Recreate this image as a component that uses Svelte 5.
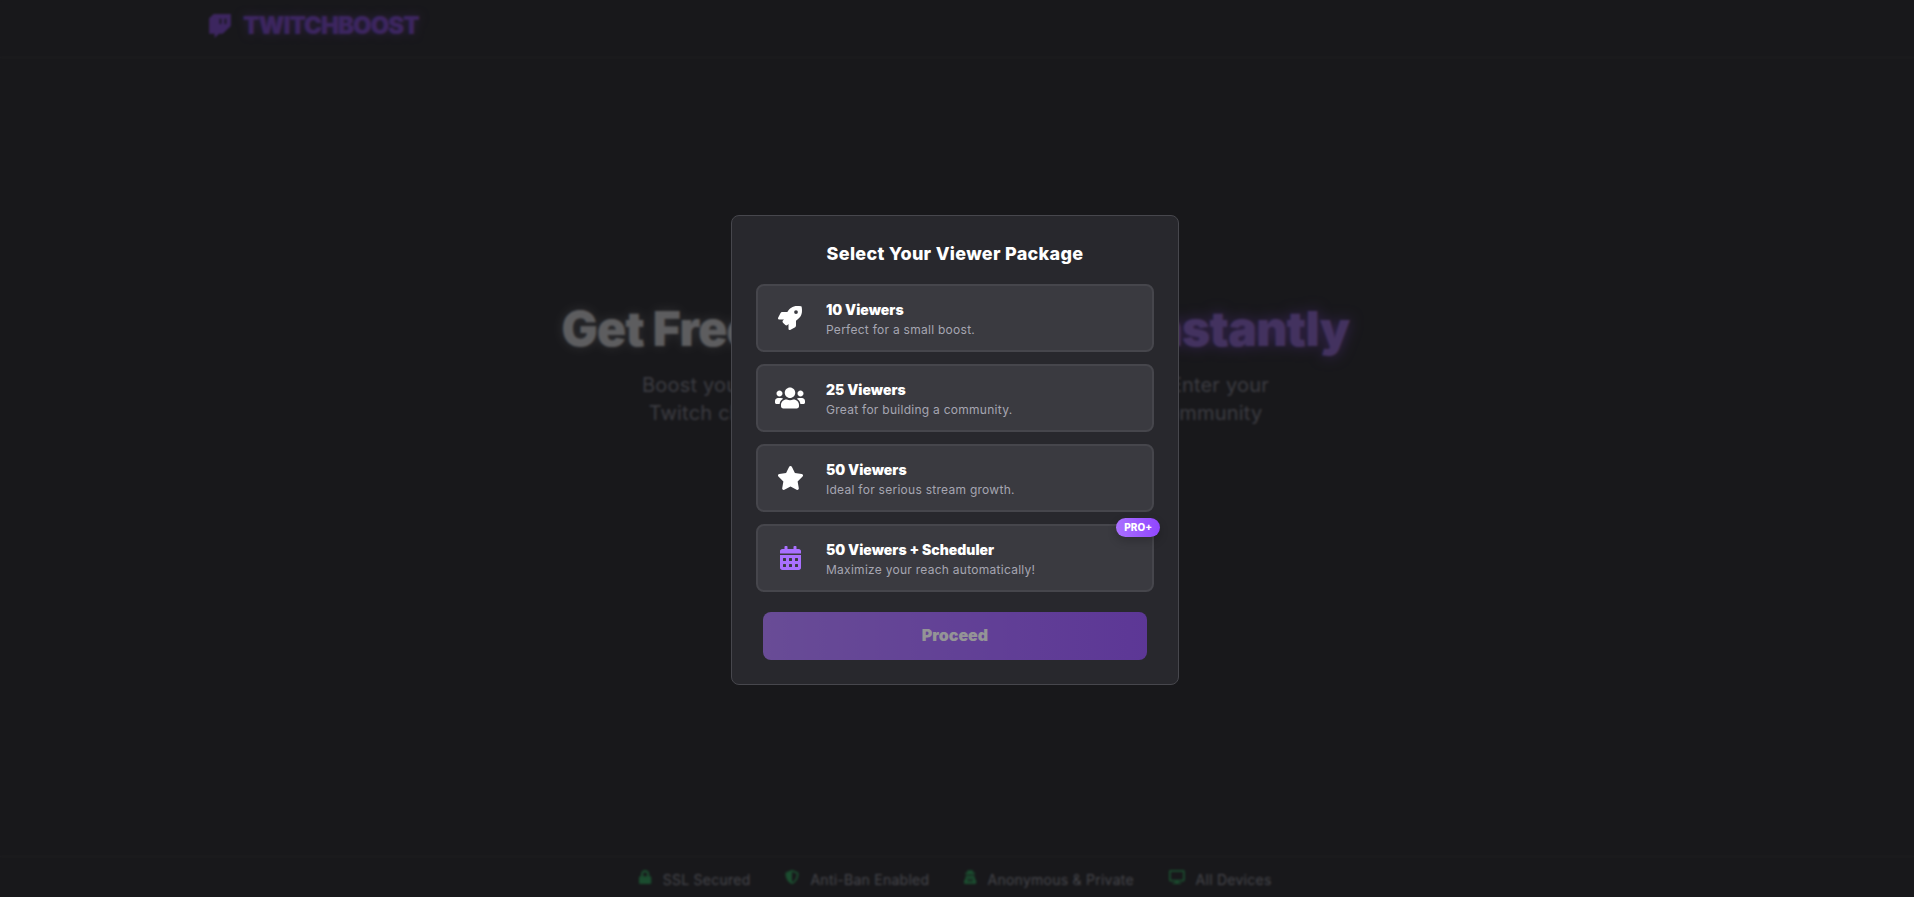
<script lang="ts">
  type Pack = { icon: string; vb: string; title: string; desc: string; pro?: boolean };

  const icons = {
    rocket: 'M505.12 19.09c-1.19-5.53-6.66-11-12.21-12.19C460.72 0 435.51 0 410.41 0 307.18 0 245.27 55.2 199.05 128H94.84c-16.35.02-35.56 11.88-42.89 26.48L2.52 253.3A28.4 28.4 0 0 0 0 264a24 24 0 0 0 24.01 24h103.81l-22.47 22.47c-11.37 11.36-13 32.26 0 45.25l50.9 50.91c11.16 11.19 32.16 13.16 45.28 0l22.47-22.47V488a24 24 0 0 0 24.01 24 28.56 28.56 0 0 0 10.71-2.52l98.73-49.39c14.63-7.3 26.51-26.5 26.51-42.86V312.8c72.6-46.31 128.03-108.41 128.03-211.09.01-25.21.01-50.41-6.95-82.62zM384.04 168a40 40 0 1 1 40.01-40 40.02 40.02 0 0 1-40.01 40z',
    users: 'M96 224c35.3 0 64-28.7 64-64s-28.7-64-64-64-64 28.7-64 64 28.7 64 64 64zm448 0c35.3 0 64-28.7 64-64s-28.7-64-64-64-64 28.7-64 64 28.7 64 64 64zm32 32h-64c-17.6 0-33.5 7.1-45.1 18.6 40.3 22.1 68.9 62 75.1 109.4h66c17.7 0 32-14.3 32-32v-32c0-35.3-28.7-64-64-64zm-256 0c61.9 0 112-50.1 112-112S381.9 32 320 32 208 82.1 208 144s50.1 112 112 112zm76.8 32h-8.3c-20.8 10-43.9 16-68.5 16s-47.6-6-68.5-16h-8.3C179.6 288 128 339.6 128 403.2V432c0 26.5 21.5 48 48 48h288c26.5 0 48-21.5 48-48v-28.8c0-63.6-51.6-115.2-115.2-115.2zm-223.7-13.4C161.5 263.1 145.6 256 128 256H64c-35.3 0-64 28.7-64 64v32c0 17.7 14.3 32 32 32h65.9c6.3-47.4 34.9-87.3 75.2-109.4z',
    star: 'M259.3 17.8L194 150.2 47.9 171.5c-26.2 3.8-36.7 36.1-17.7 54.6l105.7 103-25 145.5c-4.5 26.3 23.2 46 46.4 33.7L288 439.6l130.7 68.7c23.2 12.2 50.9-7.4 46.4-33.7l-25-145.5 105.7-103c19-18.5 8.5-50.8-17.7-54.6L382 150.2 316.7 17.8c-11.7-23.6-45.6-23.9-57.4 0z',
    calendar: 'M0 464c0 26.5 21.5 48 48 48h352c26.5 0 48-21.5 48-48V192H0v272zm320-196c0-6.6 5.4-12 12-12h40c6.6 0 12 5.4 12 12v40c0 6.6-5.4 12-12 12h-40c-6.6 0-12-5.4-12-12v-40zm0 128c0-6.6 5.4-12 12-12h40c6.6 0 12 5.4 12 12v40c0 6.6-5.4 12-12 12h-40c-6.6 0-12-5.4-12-12v-40zM192 268c0-6.6 5.4-12 12-12h40c6.6 0 12 5.4 12 12v40c0 6.6-5.4 12-12 12h-40c-6.6 0-12-5.4-12-12v-40zm0 128c0-6.6 5.4-12 12-12h40c6.6 0 12 5.4 12 12v40c0 6.6-5.4 12-12 12h-40c-6.6 0-12-5.4-12-12v-40zM64 268c0-6.6 5.4-12 12-12h40c6.6 0 12 5.4 12 12v40c0 6.6-5.4 12-12 12H76c-6.6 0-12-5.4-12-12v-40zm0 128c0-6.6 5.4-12 12-12h40c6.6 0 12 5.4 12 12v40c0 6.6-5.4 12-12 12H76c-6.6 0-12-5.4-12-12v-40zM400 64h-48V16c0-8.8-7.2-16-16-16h-32c-8.8 0-16 7.2-16 16v48H160V16c0-8.8-7.2-16-16-16h-32c-8.8 0-16 7.2-16 16v48H48C21.5 64 0 85.5 0 112v48h448v-48c0-26.5-21.5-48-48-48z',
    lock: 'M400 224h-24v-72C376 68.2 307.8 0 224 0S72 68.2 72 152v72H48c-26.5 0-48 21.5-48 48v192c0 26.5 21.5 48 48 48h352c26.5 0 48-21.5 48-48V272c0-26.5-21.5-48-48-48zm-104 0H152v-72c0-39.7 32.3-72 72-72s72 32.3 72 72v72z',
    shield: 'M466.5 83.7l-192-80a48.15 48.15 0 0 0-36.9 0l-192 80C27.7 91.1 16 108.6 16 128c0 198.5 114.5 335.7 221.5 380.3 11.8 4.9 25.1 4.9 36.9 0C360.1 472.6 496 349.3 496 128c0-19.4-11.7-36.9-29.5-44.3zM256.1 446.3l-.1-381 175.9 73.3c-3.3 151.4-82.1 261.1-175.8 307.7z',
    secret: 'M383.9 308.3l23.9-62.6c4-10.5-3.7-21.7-15-21.7h-58.5c11-18.9 17.8-40.6 17.8-64v-.3c39.2-7.8 64-19.1 64-31.7 0-13.3-27.3-25.1-70.1-33-9.2-32.8-27-65.8-40.6-82.8-9.5-11.9-25.9-15.6-39.5-8.8l-27.6 13.8c-9 4.5-19.6 4.5-28.6 0L182.1 3.4c-13.6-6.8-30-3.1-39.5 8.8-13.5 17-31.4 50-40.6 82.8-42.7 7.9-70 19.7-70 33 0 12.6 24.8 23.9 64 31.7v.3c0 23.4 6.8 45.1 17.8 64H56.3c-11.5 0-19.2 11.7-14.7 22.3l25.8 60.2C27.3 329.8 0 372.7 0 422.4v44.8C0 491.9 20.1 512 44.8 512h358.4c24.7 0 44.8-20.1 44.8-44.8v-44.8c0-48.4-25.8-90.4-64.1-114.1zM176 480l-41.6-192 49.6 32 24 40-32 120zm96 0l-32-120 24-40 49.6-32L272 480zm41.7-298.5c-3.9 11.9-7 24.6-16.5 33.4-10.1 9.3-48 22.4-64-25-2.8-8.4-15.4-8.4-18.3 0-17 50.2-56 32.4-64 25-9.5-8.8-12.7-21.5-16.5-33.4-.8-2.5-6.3-5.7-6.3-5.8v-10.8c28.3 3.6 61 5.8 96 5.8s67.7-2.1 96-5.8v10.8c-.1.1-5.6 3.2-6.4 5.8z',
    desktop: 'M528 0H48C21.5 0 0 21.5 0 48v320c0 26.5 21.5 48 48 48h192l-16 48h-72c-13.3 0-24 10.7-24 24s10.7 24 24 24h272c13.3 0 24-10.7 24-24s-10.7-24-24-24h-72l-16-48h192c26.5 0 48-21.5 48-48V48c0-26.5-21.5-48-48-48zm-16 352H64V64h448v288z',
    twitch: 'M120.83 0 24.31 91.42v329.16h115.83V512l96.53-91.42h77.25L487.69 256V0zM246.37 103H285v109.75h-38.63zm106.17.47h38.63v109.7h-38.63z'
  };

  const packs: Pack[] = [
    { icon: icons.rocket, vb: '0 0 512 512', title: '10 Viewers', desc: 'Perfect for a small boost.' },
    { icon: icons.users, vb: '0 0 640 512', title: '25 Viewers', desc: 'Great for building a community.' },
    { icon: icons.star, vb: '0 0 576 512', title: '50 Viewers', desc: 'Ideal for serious stream growth.' },
    { icon: icons.calendar, vb: '0 0 448 512', title: '50 Viewers + Scheduler', desc: 'Maximize your reach automatically!', pro: true }
  ];

  const badges = [
    { icon: icons.lock, vb: '0 0 448 512', label: 'SSL Secured' },
    { icon: icons.shield, vb: '0 0 512 512', label: 'Anti-Ban Enabled' },
    { icon: icons.secret, vb: '0 0 448 512', label: 'Anonymous & Private' },
    { icon: icons.desktop, vb: '0 0 576 512', label: 'All Devices' }
  ];
</script>

<div class="page">
  <header>
    <div class="brand">
      <svg class="logo" viewBox="0 0 512 512" aria-hidden="true"><path fill-rule="evenodd" d={icons.twitch} /></svg>
      <span>TWITCHBOOST</span>
    </div>
  </header>

  <main>
    <h1>Get Free Twitch Viewers <em>Instantly</em></h1>
    <p>Boost your stream's visibility and grow your audience. Enter your<br />Twitch channel to get started and join our incredible community</p>
  </main>

  <footer>
    {#each badges as b}
      <div class="badge">
        <svg viewBox={b.vb} aria-hidden="true"><path d={b.icon} /></svg>
        <span>{b.label}</span>
      </div>
    {/each}
  </footer>

  <div class="overlay">
    <div class="modal">
      <h2>Select Your Viewer Package</h2>
      <div class="list">
        {#each packs as p}
          <button type="button" class="pack" class:pro={p.pro}>
            <span class="ico"><svg viewBox={p.vb} aria-hidden="true"><path d={p.icon} /></svg></span>
            <span class="txt">
              <strong>{p.title}</strong>
              <small>{p.desc}</small>
            </span>
            {#if p.pro}<span class="tag">PRO+</span>{/if}
          </button>
        {/each}
      </div>
      <button type="button" class="proceed"><span>Proceed</span></button>
    </div>
  </div>
</div>

<style>
  :global(body) {
    margin: 0;
    background: #18181b;
  }

  .page {
    position: relative;
    height: 897px;
    overflow: hidden;
    display: flex;
    flex-direction: column;
    font-family: Inter, "Open Sans", sans-serif;
    color: #fff;
  }

  header {
    height: 58px;
    flex-shrink: 0;
    border-bottom: 1px solid rgb(255 255 255 / 0.1);
    padding-left: 208px;
    display: flex;
    align-items: center;
    padding-bottom: 6px;
    box-sizing: border-box;
  }

  .brand {
    display: flex;
    align-items: center;
    gap: 11px;
    color: #9146ff;
    font-size: 24px;
    font-weight: 900;
    letter-spacing: -1px;
    text-shadow: 0 0 10px rgb(145 70 255 / 0.5);
  }

  .logo {
    width: 24px;
    height: 24px;
    fill: currentColor;
  }

  main {
    flex: 1;
    display: flex;
    flex-direction: column;
    align-items: center;
    padding: 241px 3px 0 0;
  }

  h1 {
    margin: 0;
    font-size: 48px;
    line-height: 60px;
    font-weight: 900;
    letter-spacing: -0.7px;
    text-shadow: 0 0 12px rgb(255 255 255 / 0.35);
  }

  h1 em {
    font-style: normal;
    color: #a970ff;
    text-shadow: 0 0 14px rgb(145 70 255 / 0.8);
  }

  main p {
    margin: 12px 0 0;
    font-size: 20px;
    line-height: 28px;
    letter-spacing: 0.2px;
    text-align: center;
    color: #8f8f9c;
  }

  footer {
    height: 41px;
    flex-shrink: 0;
    border-top: 1px solid rgb(255 255 255 / 0.1);
    display: flex;
    justify-content: center;
    align-items: center;
    gap: 35px;
    font-size: 14px;
    letter-spacing: 0.25px;
    color: #adadb8;
    padding: 4px 3px 0 0;
    box-sizing: border-box;
  }

  .badge {
    display: flex;
    align-items: center;
    gap: 11px;
  }

  .badge svg {
    height: 14px;
    margin-top: -5px;
    fill: #22c55e;
  }

  .overlay {
    position: absolute;
    inset: 0;
    display: flex;
    align-items: center;
    justify-content: center;
    padding-right: 4px;
    background: rgb(24 24 27 / 0.7);
    backdrop-filter: blur(1px);
  }

  .modal {
    width: 448px;
    margin-top: 3px;
    box-sizing: border-box;
    padding: 24px;
    background: #28282d;
    border: 1px solid #47474d;
    border-radius: 8px;
  }

  h2 {
    margin: 0 0 16px;
    height: 28px;
    font-size: 18px;
    line-height: 28px;
    font-weight: 800;
    letter-spacing: 0.3px;
    text-align: center;
  }

  .list {
    display: flex;
    flex-direction: column;
    gap: 12px;
  }

  .pack {
    position: relative;
    display: flex;
    align-items: center;
    height: 68px;
    padding: 0;
    background: #3a3a40;
    border: 2px solid #46464c;
    border-radius: 8px;
    color: #fff;
    font-family: inherit;
    text-align: left;
  }

  .ico {
    width: 64px;
    margin-right: 4px;
    flex-shrink: 0;
    display: flex;
    justify-content: center;
  }

  .ico svg {
    height: 24px;
    max-width: 30px;
    fill: #fff;
  }

  .pro .ico svg {
    fill: #a970ff;
  }

  .txt {
    display: flex;
    flex-direction: column;
    padding-top: 2px;
  }

  strong {
    font-size: 14px;
    line-height: 20px;
    font-weight: 900;
  }

  small {
    font-size: 12px;
    line-height: 16px;
    margin-top: 2px;
    letter-spacing: 0.27px;
    color: #a6a6b2;
  }

  .tag {
    position: absolute;
    top: -8px;
    right: -8px;
    padding: 0 8px;
    height: 19px;
    line-height: 19px;
    border-radius: 999px;
    background: linear-gradient(90deg, #a970ff, #9146ff);
    font-size: 10px;
    font-weight: 800;
    box-shadow: 0 4px 10px rgb(0 0 0 / 0.2);
  }

  .proceed {
    display: block;
    width: 384px;
    height: 48px;
    margin: 20px auto 0;
    padding: 0 0 2px;
    border: 0;
    border-radius: 8px;
    background: linear-gradient(90deg, #a970ff, #9146ff);
    opacity: 0.5;
    color: #fff;
    font-family: inherit;
    font-size: 16px;
    font-weight: 900;
  }
</style>
